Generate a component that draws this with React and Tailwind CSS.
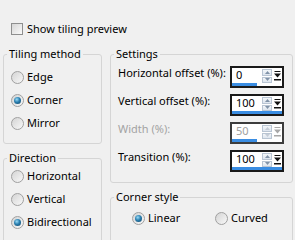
import React from 'react'

const tilingMethods = [
  { label: 'Edge', checked: false },
  { label: 'Corner', checked: true },
  { label: 'Mirror', checked: false },
]

const directions = [
  { label: 'Horizontal', checked: false },
  { label: 'Vertical', checked: false },
  { label: 'Bidirectional', checked: true },
]

const settings = [
  { label: 'Horizontal offset (%):', value: '0', fill: 25 },
  { label: 'Vertical offset (%):', value: '100', fill: 50 },
  { label: 'Width (%):', value: '50', fill: 25, disabled: true },
  { label: 'Transition (%):', value: '100', fill: 50 },
]

function Radio({ checked }) {
  return (
    <span className="relative w-[13px] h-[13px] shrink-0 rounded-full border border-[#a0a0a0] bg-[linear-gradient(135deg,#d4d4d4,#f8f8f8)] flex items-center justify-center">
      {checked && (
        <span className="w-[7px] h-[7px] rounded-full bg-[radial-gradient(circle_at_40%_35%,#9bdcf7,#2a7fb0_45%,#0d3f60)]" />
      )}
    </span>
  )
}

function GroupBox({ title, className, children }) {
  return (
    <fieldset className={`border border-[#d5d5d5] rounded-[3px] ${className}`}>
      <legend className="ml-[3px] px-[2px] leading-[14px]">{title}</legend>
      {children}
    </fieldset>
  )
}

// small slider-popup button: bar, down triangle, bar
function PinIcon({ color }) {
  return (
    <svg width="7" height="10" viewBox="0 0 7 10" className="mt-[3px]">
      <rect x="0.5" y="0" width="6" height="1" fill={color} />
      <polygon points="0,2.5 7,2.5 3.5,6.5" fill={color} />
      <rect x="0" y="8" width="7" height="1.5" fill={color} />
    </svg>
  )
}

function SpinButton({ up, disabled }) {
  const tri = disabled ? '#c4ccd6' : '#8193a8'
  return (
    <span className="w-[10px] h-[7px] border border-[#b9c5d3] bg-[linear-gradient(#f4f7fa,#dde5ee)] flex items-center justify-center">
      <svg width="5" height="3" viewBox="0 0 5 3">
        <polygon points={up ? '0,3 5,3 2.5,0' : '0,0 5,0 2.5,3'} fill={tri} />
      </svg>
    </span>
  )
}

function SpinBox({ value, fill, disabled }) {
  return (
    <div className={`w-[54px] h-[22px] border-2 ${disabled ? 'border-[#3c3c3c]' : 'border-[#1a1a1a]'} bg-white flex flex-col`}>
      <div className="flex h-[15px]">
        <span className={`w-[30px] pl-[4px] leading-[13px] ${disabled ? 'text-[#a0a0a0]' : 'text-black'}`}>{value}</span>
        <div className="w-[10px] flex flex-col gap-px pt-px">
          <SpinButton up disabled={disabled} />
          <SpinButton disabled={disabled} />
        </div>
        <div className="ml-[2px] w-[7px]">
          <PinIcon color={disabled ? '#a8a8a8' : '#111111'} />
        </div>
      </div>
      <div className="h-[3px] bg-[#3a8de2]" style={{ width: fill }} />
    </div>
  )
}

export default function App() {
  return (
    <div className="w-[295px] h-[240px] overflow-hidden bg-[#f0f0f0] font-['Noto_Sans',Arial,sans-serif] text-[11px] text-black">
      {/* Preview toggle */}
      <div className="pt-[23px] pl-[11px] flex items-center gap-[4px] h-[35px]">
        <span className="w-[12px] h-[12px] border border-[#8e8f8f] bg-[linear-gradient(135deg,#d6d6d6,#fafafa)]" />
        <span className="leading-[14px]">Show tiling preview</span>
      </div>

      <div className="mt-[12px] pl-[3px] flex gap-[8px]">
        {/* Left column */}
        <div className="w-[99px] flex flex-col gap-[7px]">
          <GroupBox title="Tiling method" className="h-[97px]">
            <div className="pt-[5px] pl-[7px]">
              {tilingMethods.map((m) => (
                <div key={m.label} className="h-[23px] flex items-center gap-[3px]">
                  <Radio checked={m.checked} />
                  <span>{m.label}</span>
                </div>
              ))}
            </div>
          </GroupBox>
          <GroupBox title="Direction" className="h-[110px]">
            <div className="pl-[7px]">
              {directions.map((d) => (
                <div key={d.label} className="h-[23px] flex items-center gap-[3px]">
                  <Radio checked={d.checked} />
                  <span>{d.label}</span>
                </div>
              ))}
            </div>
          </GroupBox>
        </div>

        {/* Right column */}
        <div className="w-[183px] flex flex-col gap-[7px]">
          <GroupBox title="Settings" className="h-[136px]">
            <div className="pt-[5px] pl-[7px] pr-[8px] flex flex-col gap-[6px]">
              {settings.map((s) => (
                <div key={s.label} className="flex justify-between items-start">
                  <span className={`leading-[14px] ${s.disabled ? 'text-[#a3a3a3]' : ''}`}>{s.label}</span>
                  <SpinBox value={s.value} fill={s.fill} disabled={s.disabled} />
                </div>
              ))}
            </div>
          </GroupBox>
          <GroupBox title="Corner style" className="h-[80px]">
            <div className="pt-[3px] pl-[21px] flex">
              <div className="w-[83px] h-[23px] flex items-center gap-[3px]">
                <Radio checked />
                <span>Linear</span>
              </div>
              <div className="h-[23px] flex items-center gap-[3px]">
                <Radio />
                <span>Curved</span>
              </div>
            </div>
          </GroupBox>
        </div>
      </div>
    </div>
  )
}
